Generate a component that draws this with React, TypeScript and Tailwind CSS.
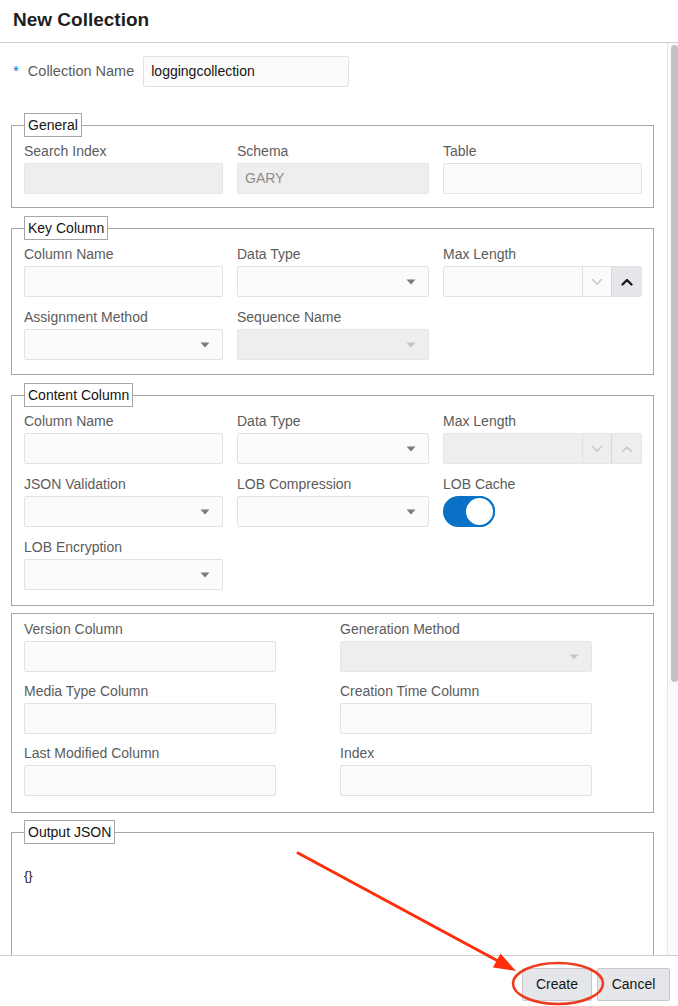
import React from 'react';

const font = { fontFamily: '"Liberation Sans", Arial, sans-serif' };

function Label({ children }: { children: React.ReactNode }) {
  return <div className="mb-[3px] text-[14px] leading-[18px] text-[#5c5c5c]">{children}</div>;
}

function TextInput({ disabled, value }: { disabled?: boolean; value?: string }) {
  return (
    <div
      className={
        'flex h-[31px] items-center rounded-[2px] border px-[7px] text-[14px] ' +
        (disabled ? 'border-[#e6e6e6] bg-[#eeeeee] text-[#8c8c8c]' : 'border-[#e2e2e2] bg-[#fbfbfb] text-[#161513]')
      }
    >
      {value}
    </div>
  );
}

function Caret({ disabled }: { disabled?: boolean }) {
  return (
    <svg width="10" height="6" viewBox="0 0 10 6">
      <path d="M0.5 0.5 L9.5 0.5 L5 5.5 Z" fill={disabled ? '#c4c4c4' : '#7a7a7a'} />
    </svg>
  );
}

function Select({ disabled }: { disabled?: boolean }) {
  return (
    <div
      className={
        'flex h-[31px] items-center justify-end rounded-[2px] border pr-[12px] ' +
        (disabled ? 'border-[#e6e6e6] bg-[#eeeeee]' : 'border-[#e2e2e2] bg-[#fbfbfb]')
      }
    >
      <Caret disabled={disabled} />
    </div>
  );
}

function Chevron({ up, color, width }: { up?: boolean; color: string; width: number }) {
  return (
    <svg width="12" height="8" viewBox="0 0 12 8">
      <path
        d={up ? 'M1.5 6.5 L6 2 L10.5 6.5' : 'M1.5 1.5 L6 6 L10.5 1.5'}
        fill="none"
        stroke={color}
        strokeWidth={width}
        strokeLinecap="round"
        strokeLinejoin="round"
      />
    </svg>
  );
}

function Spinner({ disabled }: { disabled?: boolean }) {
  return (
    <div
      className={
        'flex h-[31px] rounded-[2px] border ' +
        (disabled ? 'border-[#e6e6e6] bg-[#eeeeee]' : 'border-[#e2e2e2] bg-[#fbfbfb]')
      }
    >
      <div className="flex-1" />
      <div className="flex w-[29px] items-center justify-center border-l border-[#e0e0e0]">
        <Chevron color="#c8c8c8" width={1.5} />
      </div>
      <div
        className={
          'flex w-[30px] items-center justify-center border-l border-[#d8d8d8] ' +
          (disabled ? '' : 'bg-[#e4e6e9]')
        }
      >
        {disabled ? <Chevron up color="#c8c8c8" width={1.5} /> : <Chevron up color="#161513" width={2.2} />}
      </div>
    </div>
  );
}

function Toggle() {
  return (
    <div className="flex h-[31px] w-[52px] justify-end rounded-full bg-[#0a72c6]">
      <div className="h-[31px] w-[31px] rounded-full border-2 border-[#0a72c6] bg-white" />
    </div>
  );
}

function Fieldset({ legend, children, className }: { legend?: string; children: React.ReactNode; className?: string }) {
  return (
    <fieldset className={'border border-[#a6a6a6] pl-[12px] pr-[11px] ' + (className ?? '')}>
      {legend && (
        <legend className="border border-[#a6a6a6] px-[3px] py-[1px] text-[14px] leading-[20px] text-[#161513]">
          {legend}
        </legend>
      )}
      {children}
    </fieldset>
  );
}

function Field({ label, children }: { label: string; children: React.ReactNode }) {
  return (
    <div>
      <Label>{label}</Label>
      {children}
    </div>
  );
}

const grid3 = 'grid grid-cols-[199px_192px_199px] gap-x-[14px] gap-y-[11px]';

export default function App() {
  return (
    <div className="relative flex h-[1006px] w-full flex-col overflow-hidden bg-white" style={font}>
      <div className="flex h-[43px] shrink-0 items-center border-b border-[#cfcfcf] pb-[2px] pl-[13px]">
        <h1 className="text-[19px] font-bold text-[#1f1f1f]">New Collection</h1>
      </div>

      <div className="flex min-h-0 flex-1">
        <div className="min-w-0 flex-1 overflow-hidden pl-[11px] pr-[13px]">
          <div className="flex items-center pt-[13px]">
            <span className="ml-[2px] mr-[9px] text-[15px] text-[#0572ce]">*</span>
            <span className="mr-[9px] text-[14.5px] text-[#5c5c5c]">Collection Name</span>
            <div className="w-[206px]">
              <TextInput value="loggingcollection" />
            </div>
          </div>

          <Fieldset legend="General" className="mt-[26px] pb-[13px]">
            <div className={grid3 + ' mt-[5px]'}>
              <Field label="Search Index">
                <TextInput disabled />
              </Field>
              <Field label="Schema">
                <TextInput disabled value="GARY" />
              </Field>
              <Field label="Table">
                <TextInput />
              </Field>
            </div>
          </Fieldset>

          <Fieldset legend="Key Column" className="mt-[8px] pb-[14px]">
            <div className={grid3 + ' mt-[5px]'}>
              <Field label="Column Name">
                <TextInput />
              </Field>
              <Field label="Data Type">
                <Select />
              </Field>
              <Field label="Max Length">
                <Spinner />
              </Field>
              <Field label="Assignment Method">
                <Select />
              </Field>
              <Field label="Sequence Name">
                <Select disabled />
              </Field>
            </div>
          </Fieldset>

          <Fieldset legend="Content Column" className="mt-[8px] pb-[15px]">
            <div className={grid3 + ' mt-[5px]'}>
              <Field label="Column Name">
                <TextInput />
              </Field>
              <Field label="Data Type">
                <Select />
              </Field>
              <Field label="Max Length">
                <Spinner disabled />
              </Field>
              <Field label="JSON Validation">
                <Select />
              </Field>
              <Field label="LOB Compression">
                <Select />
              </Field>
              <Field label="LOB Cache">
                <Toggle />
              </Field>
              <Field label="LOB Encryption">
                <Select />
              </Field>
            </div>
          </Fieldset>

          <Fieldset className="mt-[7px] pb-[16px] pt-[6px]">
            <div className="grid grid-cols-[252px_252px] gap-x-[64px] gap-y-[10px]">
              <Field label="Version Column">
                <TextInput />
              </Field>
              <Field label="Generation Method">
                <Select disabled />
              </Field>
              <Field label="Media Type Column">
                <TextInput />
              </Field>
              <Field label="Creation Time Column">
                <TextInput />
              </Field>
              <Field label="Last Modified Column">
                <TextInput />
              </Field>
              <Field label="Index">
                <TextInput />
              </Field>
            </div>
          </Fieldset>

          <Fieldset legend="Output JSON" className="mt-[7px] h-[220px]">
            <div className="mt-[22px] text-[13px] text-[#161513]">{'{}'}</div>
          </Fieldset>
        </div>

        <div className="w-[11px] shrink-0 border-l border-[#e6e6e6] bg-[#fafafa] pl-[3px] pt-[2px]">
          <div className="h-[637px] w-[7px] rounded-[4px] bg-[#c2c2c2]" />
        </div>
      </div>

      <div className="flex h-[51px] shrink-0 items-start justify-end gap-[5px] border-t border-[#cfcfcf] pr-[8px] pt-[12px]">
        <button className="h-[33px] w-[70px] rounded-[2px] border border-[#c6c8ca] bg-[#e4e6e9] text-[14px] text-[#161513]">
          Create
        </button>
        <button className="h-[33px] w-[73px] rounded-[2px] border border-[#c6c8ca] bg-[#e4e6e9] text-[14px] text-[#161513]">
          Cancel
        </button>
      </div>

      <svg className="pointer-events-none absolute left-0 top-0" width="678" height="1006" viewBox="0 0 678 1006">
        <line x1="298" y1="853" x2="498" y2="961" stroke="#ff2d0a" strokeWidth="3" strokeLinecap="round" />
        <path d="M516 971 L492.9 967.5 L500.5 953.5 Z" fill="#ff2d0a" />
        <ellipse cx="558" cy="983.5" rx="45" ry="20.5" fill="none" stroke="#ee3a1d" strokeWidth="2.5" />
      </svg>
    </div>
  );
}
